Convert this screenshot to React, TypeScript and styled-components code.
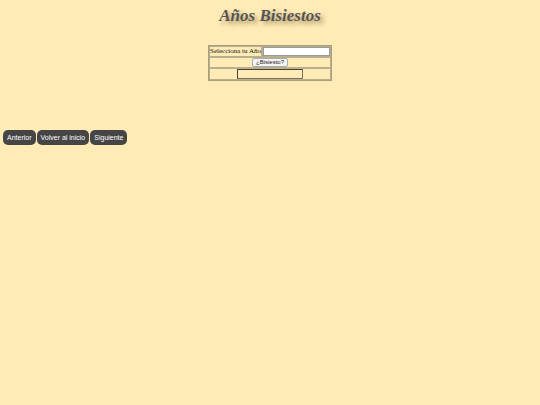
import React from "react";
import styled, { createGlobalStyle } from "styled-components";

const Global = createGlobalStyle`
  html, body { margin: 0; padding: 0; background: #ffebb6; }
  body { padding: 4px 3px; font-family: "Liberation Serif", serif; }
`;

const Title = styled.h1`
  margin: 2px 0 0;
  text-align: center;
  font-family: "Liberation Serif", serif;
  font-style: italic;
  font-weight: bold;
  font-size: 17px;
  line-height: 20px;
  color: #555;
  text-shadow: 3px 3px 4px rgba(80, 60, 20, 0.5);
`;

const Table = styled.table`
  margin: 19px auto 0;
  border: 1px solid #a99e7e;
  border-spacing: 0;
  font-family: "Liberation Serif", serif;
  font-size: 7px;
  color: #111;
`;

const Cell = styled.td<{ $center?: boolean }>`
  border: 1px solid #b9ae8e;
  padding: 0;
  height: 9px;
  line-height: 9px;
  text-align: ${(p) => (p.$center ? "center" : "left")};
  white-space: nowrap;
  vertical-align: middle;
`;

const YearInput = styled.input`
  box-sizing: border-box;
  width: 67px;
  height: 9px;
  margin: 0;
  padding: 0 2px;
  border: 1px solid #9a9a9a;
  background: #fff;
  font-size: 7px;
  display: block;
`;

const CheckButton = styled.button`
  box-sizing: border-box;
  height: 9px;
  margin: 0;
  padding: 0 3px;
  display: inline-block;
  vertical-align: top;
  font-family: "Liberation Sans", Arial, sans-serif;
  font-size: 6px;
  line-height: 7px;
  color: #222;
  background: #f5f5f5;
  border: 1px solid #aaa;
  border-radius: 2px;
`;

const Output = styled.input`
  box-sizing: border-box;
  width: 66px;
  height: 10px;
  margin: 0 auto;
  padding: 0;
  display: block;
  background: transparent;
  border: 1px solid #4a4232;
  border-bottom-color: #7a705a;
  border-right-color: #7a705a;
`;

const Nav = styled.div`
  display: flex;
  gap: 1px;
  margin-top: 49px;
`;

const NavButton = styled.button`
  box-sizing: border-box;
  height: 15px;
  padding: 0 4px;
  border: none;
  border-radius: 5px;
  background: #454545;
  color: #fff;
  font-family: "Liberation Sans", Arial, sans-serif;
  font-size: 7px;
`;

export default function App() {
  return (
    <>
      <Global />
      <Title>Años Bisiestos</Title>
      <Table>
        <tbody>
          <tr>
            <Cell>Selecciona tu Año</Cell>
            <Cell>
              <YearInput type="text" />
            </Cell>
          </tr>
          <tr>
            <Cell $center colSpan={2}>
              <CheckButton>¿Bisiesto?</CheckButton>
            </Cell>
          </tr>
          <tr>
            <Cell colSpan={2}>
              <Output type="text" readOnly />
            </Cell>
          </tr>
        </tbody>
      </Table>
      <Nav>
        <NavButton>Anterior</NavButton>
        <NavButton>Volver al inicio</NavButton>
        <NavButton>Siguiente</NavButton>
      </Nav>
    </>
  );
}
